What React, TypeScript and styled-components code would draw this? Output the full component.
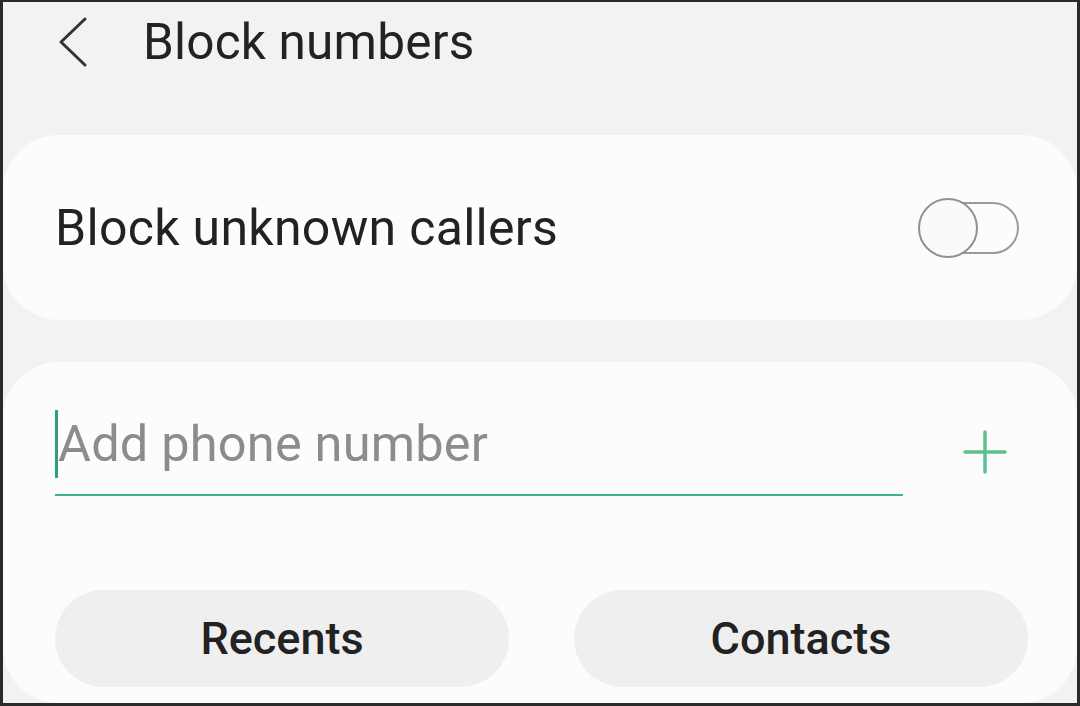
import styled, { createGlobalStyle } from "styled-components";

const GlobalStyle = createGlobalStyle`
  * {
    box-sizing: border-box;
  }
  html, body {
    margin: 0;
    padding: 0;
    background: #222;
  }
  body {
    font-family: Roboto, "Noto Sans", "Liberation Sans", sans-serif;
  }
`;

const Screen = styled.div`
  width: 1080px;
  height: 706px;
  overflow: hidden;
  border-style: solid;
  border-color: #2a2a2a;
  border-width: 2px 3px 3px 3px;
  background: #f2f2f2;
  display: flex;
  flex-direction: column;
`;

const Header = styled.header`
  display: flex;
  align-items: center;
  height: 80px;
  padding-left: 54px;
  flex-shrink: 0;
`;

const BackBtn = styled.button`
  display: flex;
  align-items: center;
  justify-content: center;
  padding: 0;
  border: 0;
  background: none;
  width: 32px;
  height: 52px;
  color: #333;
  cursor: pointer;
`;

const Title = styled.h1`
  margin: 0 0 0 54px;
  font-size: 49.5px;
  font-weight: 400;
  color: #222;
  letter-spacing: 0.2px;
`;

const Card = styled.section<{ $grow?: boolean }>`
  background: #fcfcfc;
  border-radius: 56px;
  flex-shrink: 0;
  ${(p) => (p.$grow ? "flex: 1;" : "")}
`;

const SwitchRow = styled.div`
  display: flex;
  align-items: center;
  justify-content: space-between;
  height: 185px;
  padding: 0 58px 0 52px;
`;

const RowLabel = styled.span`
  font-size: 50px;
  color: #222;
  letter-spacing: 0.3px;
`;

const Toggle = styled.div`
  position: relative;
  width: 101px;
  height: 60px;
`;

const Track = styled.div`
  position: absolute;
  left: 10px;
  right: 0;
  top: 4px;
  bottom: 4px;
  border: 2px solid #9a9a9a;
  border-radius: 30px;
`;

const Knob = styled.div`
  position: absolute;
  left: 0;
  top: 0;
  width: 60px;
  height: 60px;
  border: 2.5px solid #929292;
  border-radius: 50%;
  background: #fafafa;
`;

const Gap = styled.div<{ $h: number }>`
  height: ${(p) => p.$h}px;
  flex-shrink: 0;
`;

const InputRow = styled.div`
  display: flex;
  align-items: flex-end;
  padding: 46px 0 0 52px;
`;

const Field = styled.div`
  width: 848px;
  height: 88px;
  padding-top: 2px;
  border-bottom: 2.5px solid #3fb68a;
`;

const Entry = styled.div`
  display: flex;
  align-items: center;
  height: 68px;
`;

const Caret = styled.span`
  width: 3px;
  height: 68px;
  background: #2f9e79;
  flex-shrink: 0;
`;

const Placeholder = styled.span`
  font-size: 50.5px;
  line-height: 68px;
  color: #8c8c8c;
  letter-spacing: 0.2px;
`;

const AddBtn = styled.button`
  display: flex;
  align-items: center;
  justify-content: center;
  border: 0;
  background: none;
  padding: 0;
  width: 60px;
  height: 60px;
  margin: 0 0 14px 52px;
  color: #5cbf8e;
  cursor: pointer;
`;

const ButtonRow = styled.div`
  display: grid;
  grid-template-columns: 1fr 1fr;
  gap: 65px;
  padding: 94px 49px 0 52px;
`;

const PillButton = styled.button`
  height: 97px;
  border: 0;
  border-radius: 49px;
  background: #efefef;
  font-family: inherit;
  font-size: 45px;
  font-weight: 500;
  color: #222;
  cursor: pointer;
`;

export default function App() {
  return (
    <>
      <GlobalStyle />
      <Screen>
        <Header>
          <BackBtn aria-label="Back">
            <svg width="32" height="52" viewBox="0 0 32 52" fill="none">
              <path
                d="M28 3 L4 26 L28 49"
                stroke="currentColor"
                strokeWidth="3"
                strokeLinecap="round"
                strokeLinejoin="round"
              />
            </svg>
          </BackBtn>
          <Title>Block numbers</Title>
        </Header>
        <Gap $h={53} />
        <Card>
          <SwitchRow>
            <RowLabel>Block unknown callers</RowLabel>
            <Toggle>
              <Track />
              <Knob />
            </Toggle>
          </SwitchRow>
        </Card>
        <Gap $h={42} />
        <Card $grow>
          <InputRow>
            <Field>
              <Entry>
                <Caret />
                <Placeholder>Add phone number</Placeholder>
              </Entry>
            </Field>
            <AddBtn aria-label="Add">
              <svg width="44" height="44" viewBox="0 0 44 44">
                <path
                  d="M22 2 V42 M2 22 H42"
                  stroke="currentColor"
                  strokeWidth="3.5"
                  strokeLinecap="round"
                />
              </svg>
            </AddBtn>
          </InputRow>
          <ButtonRow>
            <PillButton>Recents</PillButton>
            <PillButton>Contacts</PillButton>
          </ButtonRow>
        </Card>
      </Screen>
    </>
  );
}
